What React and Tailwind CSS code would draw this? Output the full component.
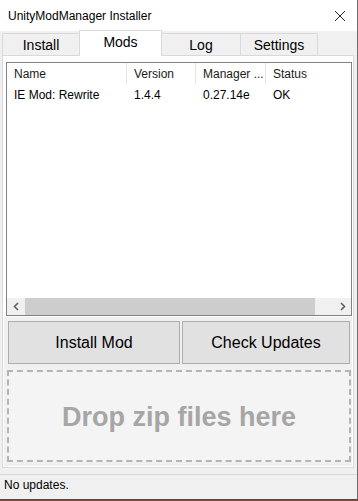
import React from 'react';

const font = { fontFamily: '"Liberation Sans", Arial, sans-serif' };

const columns = [
  { key: 'name', label: 'Name', width: 'w-[120px] border-r' },
  { key: 'version', label: 'Version', width: 'w-[69px] border-r' },
  { key: 'manager', label: 'Manager ...', width: 'w-[70px] border-r' },
  { key: 'status', label: 'Status', width: 'w-[70px]' },
];

const mods = [{ id: 1, name: 'IE Mod: Rewrite', version: '1.4.4', manager: '0.27.14e', status: 'OK' }];

const Chevron = ({ dir }) => (
  <svg width="6" height="9" viewBox="0 0 6 9" className="text-[#606060]">
    <path
      d={dir === 'left' ? 'M5 1 L1.5 4.5 L5 8' : 'M1 1 L4.5 4.5 L1 8'}
      fill="none"
      stroke="currentColor"
      strokeWidth="1.6"
    />
  </svg>
);

const App = () => {
  return (
    <div className="flex h-[501px] w-[358px] flex-col bg-[#f0f0f0] text-black" style={font}>
      <div className="flex flex-1 flex-col border-r border-[#6f6f6f]">
        {/* title bar */}
        <div className="flex h-[31px] items-center justify-between bg-white pl-[8px] pr-[10px]">
          <span className="text-[12px]">UnityModManager Installer</span>
          <svg width="12" height="12" viewBox="0 0 12 12" className="mr-[1px]">
            <path d="M1 1 L11 11 M11 1 L1 11" stroke="#222" strokeWidth="1" />
          </svg>
        </div>

        {/* tabs */}
        <div className="flex h-[24px] items-end pl-[2px] text-[14px]">
          <div className="flex h-[22px] w-[77px] items-center justify-center border-l border-t border-[#d9d9d9] bg-[#f0f0f0] pt-[2px]">
            Install
          </div>
          <div className="relative z-10 -mb-px flex h-[26px] w-[83px] items-center justify-center border-x border-t border-[#d9d9d9] bg-white pb-[2px]">
            Mods
          </div>
          <div className="flex h-[22px] w-[79px] items-center justify-center border-r border-t border-[#d9d9d9] bg-[#f0f0f0] pt-[2px]">
            Log
          </div>
          <div className="flex h-[22px] w-[77px] items-center justify-center border-r border-t border-[#d9d9d9] bg-[#f0f0f0] pt-[2px]">
            Settings
          </div>
        </div>

        {/* tab page */}
        <div className="ml-[2px] flex h-[413px] w-[352px] flex-col border border-[#d9d9d9] bg-white pt-[6px]">
          <div className="ml-[3px] mr-[1px] flex h-[254px] flex-col border border-[#828282] bg-white text-[12px]">
            <div className="flex h-[21px] items-stretch">
              {columns.map((col) => (
                <div
                  key={col.key}
                  className={`${col.width} flex items-center border-[#e5e5e5] pl-[7px] text-[#1a1a1a]`}
                >
                  {col.label}
                </div>
              ))}
            </div>
            <div className="flex-1">
              {mods.map((mod) => (
                <div key={mod.id} className="flex h-[21px] items-center">
                  <div className="w-[120px] pl-[7px]">{mod.name}</div>
                  <div className="w-[69px] pl-[7px]">{mod.version}</div>
                  <div className="w-[70px] pl-[7px]">{mod.manager}</div>
                  <div className="w-[70px] pl-[7px]">{mod.status}</div>
                </div>
              ))}
            </div>
            <div className="flex h-[17px] items-stretch bg-[#f0f0f0]">
              <div className="flex w-[17px] items-center justify-center">
                <Chevron dir="left" />
              </div>
              <div className="ml-px w-[290px] bg-[#cdcdcd]" />
              <div className="flex-1" />
              <div className="flex w-[17px] items-center justify-center">
                <Chevron dir="right" />
              </div>
            </div>
          </div>

          <div className="mx-px mb-px mt-px flex flex-1 flex-col bg-[#f0f0f0] pl-[3px] pr-px pt-[4px]">
            <div className="flex gap-[2px] pl-px text-[16px]">
              <button
                type="button"
                className="flex h-[43px] w-[172px] items-center justify-center border border-[#adadad] bg-[#e1e1e1]"
              >
                Install Mod
              </button>
              <button
                type="button"
                className="flex h-[43px] w-[168px] items-center justify-center border border-[#adadad] bg-[#e1e1e1]"
              >
                Check Updates
              </button>
            </div>
            <div className="mt-[6px] flex h-[92px] w-[344px] items-center justify-center border-2 border-dashed border-[#b4b4b4] bg-[#f4f4f4] pt-[3px]">
              <span className="text-[27px] font-bold text-[#a6a6a6]">Drop zip files here</span>
            </div>
          </div>
        </div>

        {/* status bar */}
        <div className="mt-[6px] flex h-[25px] items-center border-t border-[#d7d7d7] pb-[5px] pl-[4px] text-[12px]">
          No updates.
        </div>
      </div>
      <div className="h-px bg-[#5a4545]" />
      <div className="h-[2px] bg-[#8a4840]" />
    </div>
  );
};

export default App;
